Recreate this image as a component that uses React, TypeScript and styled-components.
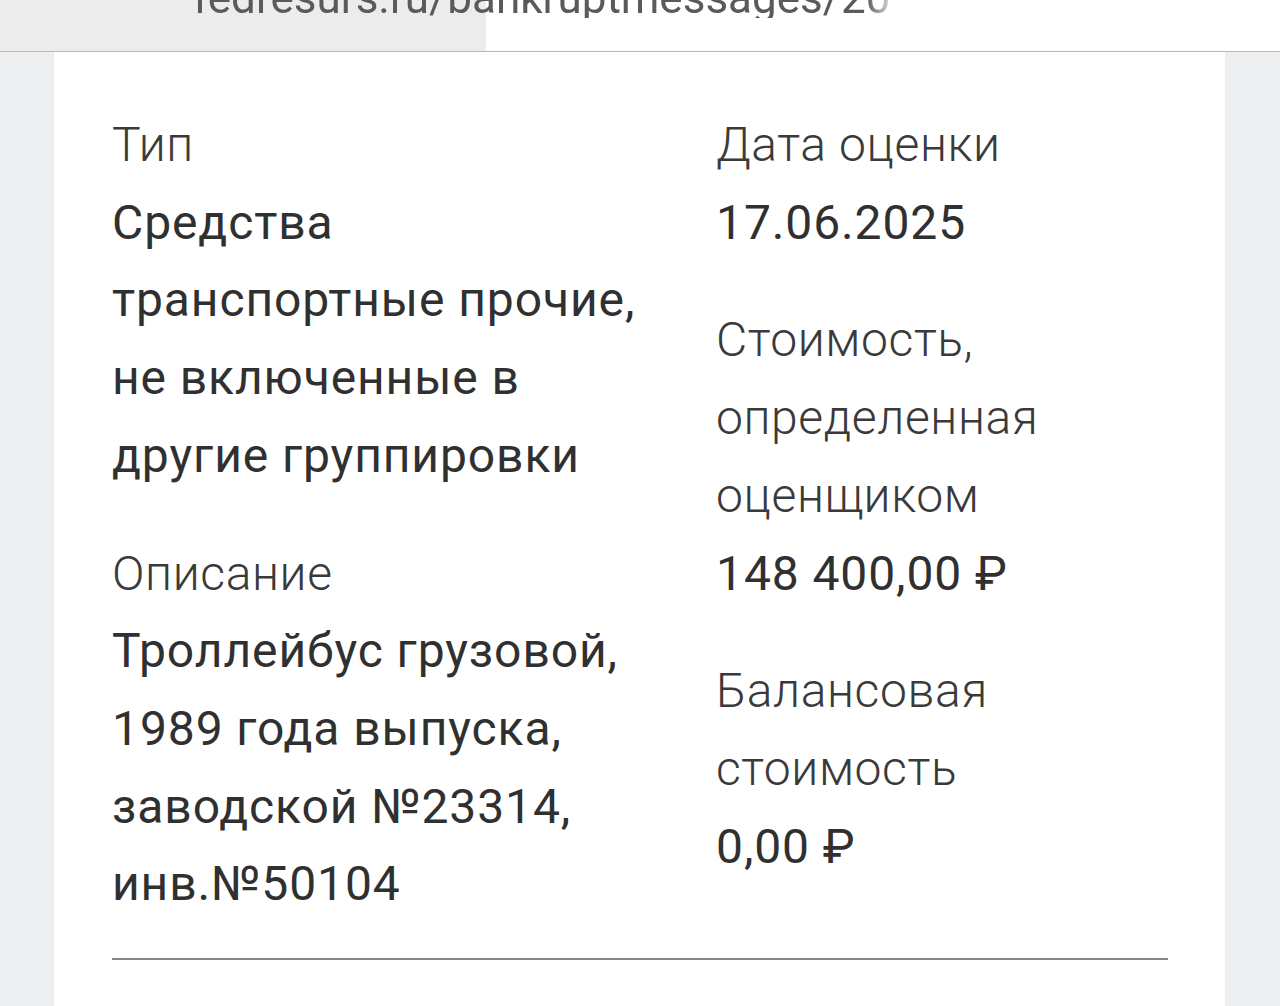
import React from "react";
import styled, { createGlobalStyle } from "styled-components";

const Global = createGlobalStyle`
  html, body {
    margin: 0;
    padding: 0;
    background: #eeeff1;
    font-family: Roboto, "Noto Sans", "Liberation Sans", sans-serif;
    -webkit-font-smoothing: antialiased;
  }
  #root {
    min-height: 1006px;
  }
`;

const Page = styled.div`
  width: 1280px;
  height: 1006px;
  overflow: hidden;
  display: flex;
  flex-direction: column;
  background: #eeeff1;
`;

const AddressBar = styled.div`
  height: 52px;
  flex: 0 0 52px;
  overflow: hidden;
  background: linear-gradient(to right, #ececec 0, #ececec 486px, #ffffff 486px);
  border-bottom: 1px solid #b9b9b9;
  box-sizing: border-box;
`;

const UrlText = styled.div`
  margin-top: -22px;
  padding-left: 193px;
  font-size: 44px;
  line-height: 40px;
  color: #5a5a5a;
  white-space: nowrap;
  -webkit-mask-image: linear-gradient(to right, #000 0, #000 866px, transparent 898px);
  mask-image: linear-gradient(to right, #000 0, #000 866px, transparent 898px);
`;

const Body = styled.div`
  flex: 1;
  display: flex;
  padding: 0 55px 0 54px;
`;

const Card = styled.section`
  flex: 1;
  background: #ffffff;
  box-shadow: 0 0 2px rgba(0, 0, 0, 0.06);
  padding: 54px 57px 0 58px;
  display: flex;
  flex-direction: column;
`;

const Grid = styled.div`
  display: grid;
  grid-template-columns: 1fr 452px;
  column-gap: 60px;
`;

const Column = styled.div`
  display: flex;
  flex-direction: column;
  gap: 40px;
`;

const Field = styled.div`
  display: flex;
  flex-direction: column;
`;

const Label = styled.div`
  font-size: 48px;
  line-height: 77.7px;
  font-weight: 300;
  letter-spacing: 0.6px;
  color: #3a3a3a;
`;

const Value = styled.div`
  font-size: 48px;
  line-height: 77.7px;
  font-weight: 400;
  letter-spacing: 0.9px;
  color: #303030;
`;

const Divider = styled.hr`
  margin: 35px 0 0 0;
  border: none;
  height: 2px;
  background: #858585;
`;

type Item = { label: string; value: string };

const left: Item[] = [
  {
    label: "Тип",
    value: "Средства транспортные прочие, не включенные в другие группировки",
  },
  {
    label: "Описание",
    value: "Троллейбус грузовой, 1989 года выпуска, заводской №23314, инв.№50104",
  },
];

const right: Item[] = [
  { label: "Дата оценки", value: "17.06.2025" },
  { label: "Стоимость, определенная оценщиком", value: "148 400,00 ₽" },
  { label: "Балансовая стоимость", value: "0,00 ₽" },
];

const renderItems = (items: Item[]) =>
  items.map((it) => (
    <Field key={it.label}>
      <Label>{it.label}</Label>
      <Value>{it.value}</Value>
    </Field>
  ));

export default function App() {
  return (
    <Page>
      <Global />
      <AddressBar>
        <UrlText>fedresurs.ru/bankruptmessages/20</UrlText>
      </AddressBar>
      <Body>
        <Card>
          <Grid>
            <Column>{renderItems(left)}</Column>
            <Column>{renderItems(right)}</Column>
          </Grid>
          <Divider />
        </Card>
      </Body>
    </Page>
  );
}
